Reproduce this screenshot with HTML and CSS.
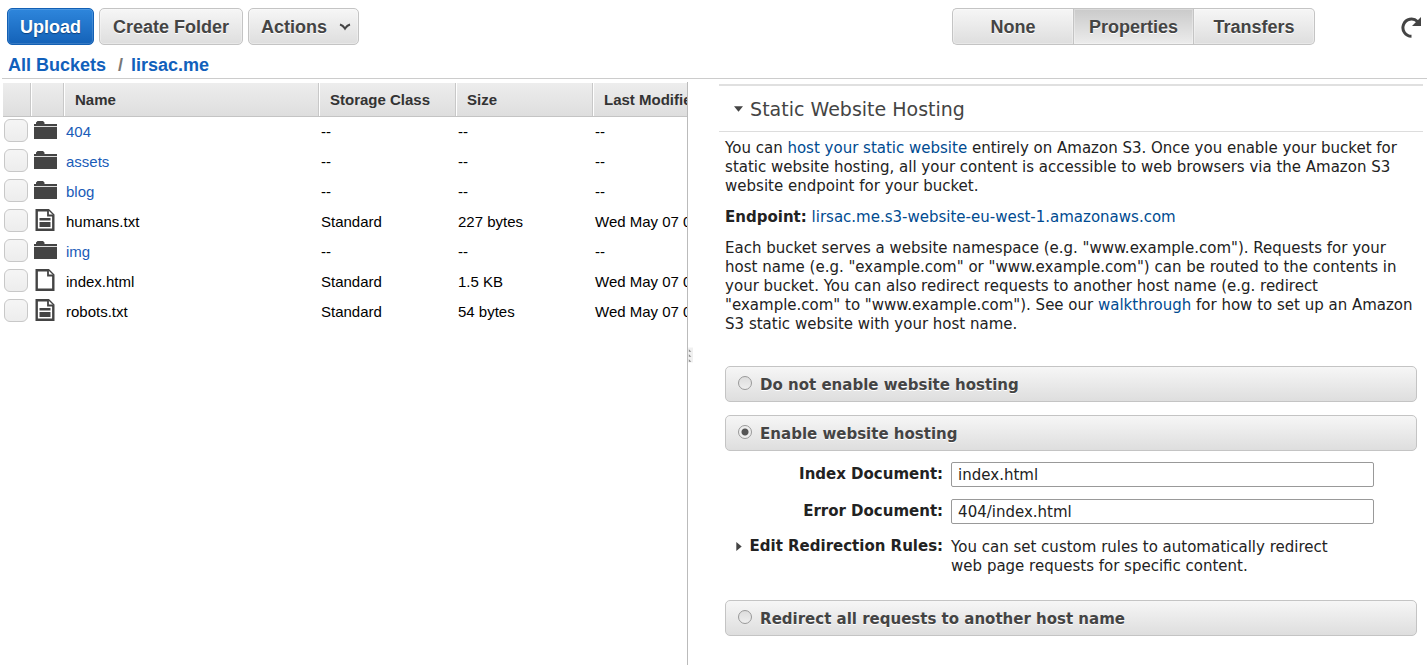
FILE: index.html
```html
<!DOCTYPE html>
<html lang="en">
<head>
<meta charset="utf-8">
<title>lirsac.me - S3 Management Console</title>
<link rel="stylesheet" href="styles.css">
</head>
<body>
<svg class="sprite" aria-hidden="true">
  <symbol id="folder" viewBox="0 0 24 20">
    <path fill="#444" d="M2 4V2.500L3.500 1H9l1.500 1.500V4H23v2H0V4z"/>
    <path fill="#ddd" d="M0 6h23v1H0z"/>
    <path fill="#444" d="M0 7h23v12H0z"/>
  </symbol>
  <symbol id="page" viewBox="0 0 20 24">
    <path fill="#fff" stroke="#444" stroke-width="2.400" d="M1.700 2.200h11.800L18.300 7v14.800H1.700z"/>
    <path fill="#fff" stroke="#444" stroke-width="1.800" d="M13 2v5.500h5.500"/>
  </symbol>
  <symbol id="text" viewBox="0 0 20 24">
    <use href="#page"/>
    <path fill="#444" d="M4.500 10h11v2.500h-11zM4.500 14h11v5h-11z"/>
  </symbol>
</svg>

<header class="top">
  <div class="toolbar">
    <button class="btn btn-primary" type="button">Upload</button>
    <button class="btn" type="button">Create Folder</button>
    <button class="btn btn-menu" type="button">Actions
      <svg class="chevron" viewBox="0 0 12 8" aria-hidden="true"><path fill="none" stroke="#444" stroke-width="2.200" d="M1 1.500C3 2 5 4 6 5.500 7 4 9 2 11 1.500"/></svg>
    </button>
    <div class="segments">
      <button class="btn segment" type="button">None</button>
      <button class="btn segment active" type="button">Properties</button>
      <button class="btn segment" type="button">Transfers</button>
    </div>
    <button class="refresh" type="button" aria-label="Refresh">
      <svg viewBox="0 0 21 22" aria-hidden="true"><path fill="none" stroke="#444" stroke-width="3" d="M10.500 20.300A8.600 8.600 0 1 1 16.500 5.500"/><path fill="#444" d="M20 1v9h-9z"/></svg>
    </button>
  </div>
  <nav class="crumbs"><a href="#">All Buckets</a><span class="slash">/</span><a href="#">lirsac.me</a></nav>
</header>

<main class="panes">
  <section class="files">
    <table>
      <colgroup><col class="c-check"><col class="c-icon"><col class="c-name"><col class="c-class"><col class="c-size"><col class="c-date"></colgroup>
      <thead>
        <tr><th></th><th></th><th>Name</th><th>Storage Class</th><th>Size</th><th>Last Modified</th></tr>
      </thead>
      <tbody>
        <tr><td><input type="checkbox" aria-label="404"></td><td><svg class="folder"><use href="#folder"/></svg></td><td><a href="#">404</a></td><td>--</td><td>--</td><td>--</td></tr>
        <tr><td><input type="checkbox" aria-label="assets"></td><td><svg class="folder"><use href="#folder"/></svg></td><td><a href="#">assets</a></td><td>--</td><td>--</td><td>--</td></tr>
        <tr><td><input type="checkbox" aria-label="blog"></td><td><svg class="folder"><use href="#folder"/></svg></td><td><a href="#">blog</a></td><td>--</td><td>--</td><td>--</td></tr>
        <tr><td><input type="checkbox" aria-label="humans.txt"></td><td><svg class="page"><use href="#text"/></svg></td><td>humans.txt</td><td>Standard</td><td>227 bytes</td><td>Wed May 07 0</td></tr>
        <tr><td><input type="checkbox" aria-label="img"></td><td><svg class="folder"><use href="#folder"/></svg></td><td><a href="#">img</a></td><td>--</td><td>--</td><td>--</td></tr>
        <tr><td><input type="checkbox" aria-label="index.html"></td><td><svg class="page"><use href="#page"/></svg></td><td>index.html</td><td>Standard</td><td>1.5 KB</td><td>Wed May 07 0</td></tr>
        <tr><td><input type="checkbox" aria-label="robots.txt"></td><td><svg class="page"><use href="#text"/></svg></td><td>robots.txt</td><td>Standard</td><td>54 bytes</td><td>Wed May 07 0</td></tr>
      </tbody>
    </table>
  </section>

  <div class="splitter"><svg class="grip" viewBox="0 0 6 18" aria-hidden="true"><path fill="#f0f0f0" d="M0 0h6v18H0z"/><path fill="#888" d="M1 2l3 3H1zM1 8l3 3H1zM1 14l3 3H1z"/></svg></div>

  <section class="props">
    <h2><svg class="tri-down" viewBox="0 0 10 6" aria-hidden="true"><path fill="#444" d="M0 0h10L5 6z"/></svg>Static Website Hosting</h2>
    <div class="content">
      <p>You can <a href="#">host your static website</a> entirely on Amazon S3. Once you enable your bucket for static website hosting, all your content is accessible to web browsers via the Amazon S3 website endpoint for your bucket.</p>
      <p><b>Endpoint:</b> <a href="#">lirsac.me.s3-website-eu-west-1.amazonaws.com</a></p>
      <p>Each bucket serves a website namespace (e.g. "www.example.com"). Requests for your host name (e.g. "example.com" or "www.example.com") can be routed to the contents in your bucket. You can also redirect requests to another host name (e.g. redirect "example.com" to "www.example.com"). See our <a href="#">walkthrough</a> for how to set up an Amazon S3 static website with your host name.</p>
      <form class="options">
        <label class="option"><input type="radio" name="hosting">Do not enable website hosting</label>
        <label class="option"><input type="radio" name="hosting" checked>Enable website hosting</label>
        <div class="fields">
          <label for="index-doc">Index Document:</label>
          <input id="index-doc" type="text" value="index.html">
          <label for="error-doc">Error Document:</label>
          <input id="error-doc" type="text" value="404/index.html">
          <button class="rules" type="button"><svg class="tri-right" viewBox="0 0 6 10" aria-hidden="true"><path fill="#444" d="M0 0l6 5-6 5z"/></svg>Edit Redirection Rules:</button>
          <span class="hint">You can set custom rules to automatically redirect web page requests for specific content.</span>
        </div>
        <label class="option"><input type="radio" name="hosting">Redirect all requests to another host name</label>
      </form>
    </div>
  </section>
</main>
</body>
</html>
```

FILE: styles.css
```css
* { box-sizing: border-box; }

body {
  display: flex;
  flex-direction: column;
  min-height: 100vh;
  margin: 0;
  background: #fff;
  color: #000;
  font: 15px/18px "Liberation Sans", Arial, sans-serif;
  overflow-x: hidden;
}

a { color: #1a5cb8; text-decoration: none; }
.sprite { position: absolute; width: 0; height: 0; }

.top {
  margin-left: 2px;
  padding: 8px 5px 0;
  border-bottom: 1px solid #ccc;
}

.toolbar { display: flex; align-items: center; gap: 5px; }

.btn {
  height: 37px;
  padding: 0 13px;
  border: 1px solid #c4c4c4;
  border-radius: 5px;
  background: linear-gradient(#f6f6f6, #dedede);
  box-shadow: inset 0 0 0 1px rgba(255, 255, 255, .3);
  color: #444;
  font: bold 18px/20px "Liberation Sans", Arial, sans-serif;
  text-shadow: 0 1px 0 #fff;
}

.btn-primary {
  padding: 0 12px;
  border-color: #1360b4;
  background: linear-gradient(#2e86dc, #1462b8);
  box-shadow: inset 0 0 0 1px rgba(255, 255, 255, .15);
  color: #fff;
  text-shadow: 0 1px 1px #0c4280;
}

.btn-menu { display: flex; align-items: center; gap: 12px; padding: 0 7px 0 12px; }
.chevron { width: 12px; height: 8px; }

.segments { display: flex; margin-left: auto; }
.segment { width: 121px; padding: 0; }
.segment:first-child { border-right: 0; border-radius: 5px 0 0 5px; }
.segment:last-child { border-left: 0; border-radius: 0 5px 5px 0; }
.segment.active { border-radius: 0; background: linear-gradient(#cacaca, #ececec); }

.refresh { width: 21px; height: 22px; margin-left: 81px; padding: 0; border: 0; background: none; }
.refresh svg { display: block; width: 21px; height: 22px; }

.crumbs {
  padding: 10px 1px 2px;
  font-size: 18px;
  font-weight: bold;
  line-height: 21px;
}
.crumbs a { color: #1160bb; }
.slash { margin: 0 8px 0 12px; color: #777; }

.panes { display: flex; flex: 1; padding-top: 3px; }

.files { flex: 0 0 48.15%; padding: 1px 0 0 3px; overflow: hidden; }
table { width: 785px; border-collapse: collapse; table-layout: fixed; }
.c-check { width: 29px; }
.c-icon { width: 33px; }
.c-name { width: 255px; }
.c-class, .c-size { width: 137px; }

th {
  height: 33px;
  padding: 1px 0 0 10px;
  border-bottom: 1px solid #c4c4c4;
  background: linear-gradient(#ededed, #dedede);
  box-shadow: inset -1px 0 #fff, inset -2px 0 #c8c8c8;
  color: #333;
  text-align: left;
}
td { height: 30px; padding: 2px 0 0 1px; white-space: nowrap; }
td svg { display: block; }
td:nth-child(2) { padding: 0 0 2px 2px; }
.folder { width: 24px; height: 20px; }
.page { width: 20px; height: 24px; margin-left: 1px; }

input[type="checkbox"] {
  display: block;
  width: 24px;
  height: 23px;
  margin: 0;
  appearance: none;
  border: 1px solid #c8c8c8;
  border-radius: 6px;
  background: linear-gradient(#f5f5f5, #ededed);
}
td:first-child { padding: 0 0 2px 1px; }

.splitter { display: flex; align-items: center; width: 6px; border-left: 1px solid #bbb; }
.grip { width: 5px; height: 18px; margin-bottom: 38px; }

.props {
  flex: 1;
  min-width: 0;
  margin: 2px 4px 0 26px;
  border-top: 2px solid #e0e0e0;
  color: #222;
  font: 15px/19px "DejaVu Sans", Verdana, sans-serif;
}
.props a { color: #004b91; }
.props h2 {
  display: flex;
  align-items: center;
  gap: 7px;
  margin: 0;
  padding: 11px 15px 10px;
  border-bottom: 1px solid #ddd;
  color: #444;
  font-size: 19px;
  font-weight: normal;
  line-height: 24px;
}
.tri-down { width: 9px; height: 6px; }

.content { padding: 7px 6px 0; }
.content p { margin: 0 0 12px; }

.options { display: flex; flex-direction: column; margin-top: 32px; }
.option {
  display: flex;
  align-items: center;
  gap: 8px;
  height: 36px;
  margin-bottom: 13px;
  padding: 2px 12px 0;
  border: 1px solid #c4c4c4;
  border-radius: 5px;
  background: linear-gradient(#f6f6f6, #dedede);
  color: #444;
  font-weight: bold;
  text-shadow: 0 1px 0 #fff;
}
input[type="radio"] {
  width: 14px;
  height: 14px;
  margin: 0 0 5px;
  appearance: none;
  border: 1px solid #999;
  border-radius: 50%;
  background: linear-gradient(#ddd, #eee);
}
input[type="radio"]:checked { background: radial-gradient(circle, #555 3px, #eee 4px); }

.fields {
  display: grid;
  grid-template-columns: 218px minmax(0, 1fr);
  gap: 12px 8px;
  align-items: center;
  margin: -2px 43px 24px 0;
}
.fields label { font-weight: bold; text-align: right; }
.fields input {
  width: 100%;
  height: 25px;
  padding: 1px 6px 0;
  border: 1px solid #999;
  border-radius: 2px;
  background: #fff;
  color: #222;
  font: inherit;
}
.rules {
  display: flex;
  align-items: center;
  align-self: start;
  justify-content: space-between;
  padding: 1px 0 0 11px;
  border: 0;
  background: none;
  color: #222;
  font: inherit;
  font-weight: bold;
  white-space: nowrap;
}
.tri-right { width: 6px; height: 9px; }
.hint { max-width: 390px; padding-top: 2px; }
```
